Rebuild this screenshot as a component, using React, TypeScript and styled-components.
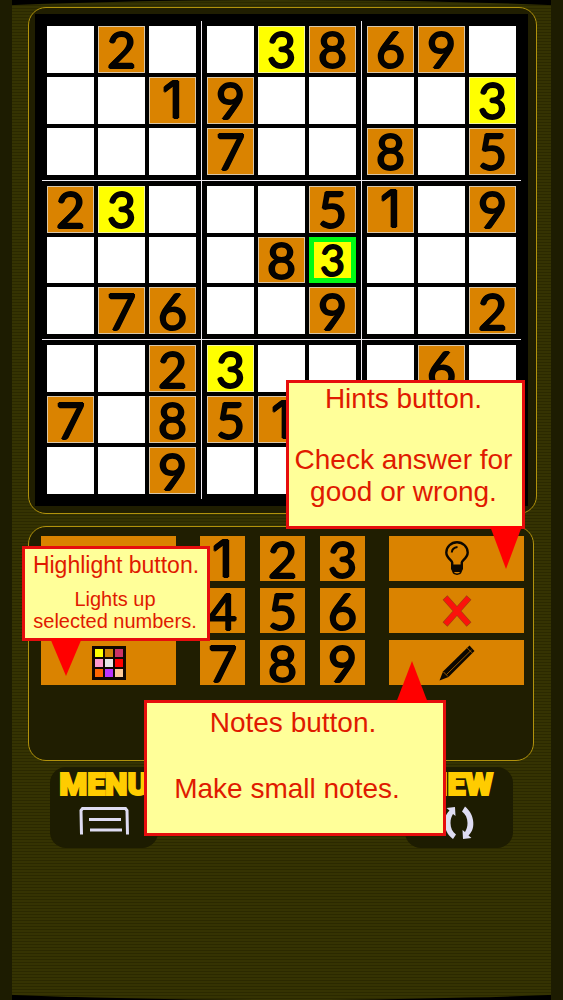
import React from "react";
import styled, { createGlobalStyle, css } from "styled-components";

const color = {
  edge: "#1d1c01",
  panel: "#201e01",
  outline: "#b1920c",
  orange: "#da8300",
  yellow: "#ffff00",
  select: "#00fa14",
  note: "#ffff99",
  noteText: "#e01a00",
  noteBorder: "#e60d0d",
  title: "#ffcc00",
  glyph: "#dedcf2",
};

const GlobalStyle = createGlobalStyle`
  * { box-sizing: border-box; }
  body { margin: 0; background: ${color.edge}; }
  button { margin: 0; padding: 0; border: 0; cursor: pointer; }
`;

const Page = styled.main`
  display: flex;
  flex-direction: column;
  min-height: 100vh;
  max-width: 640px;
  margin: 0 auto;
  padding: 0 12px;
  font-family: "Liberation Sans", Arial, sans-serif;
`;

const Surround = styled.div`
  flex: 1;
  display: flex;
  background: #000000;
`;

const Backdrop = styled.div`
  flex: 1;
  min-width: 0;
  padding: 7px 14px 24px 16px;
  clip-path: ellipse(354% 50% at 50% 50%);
  background: repeating-linear-gradient(
      to bottom,
      #353302 0,
      #353302 2px,
      #2b2900 2px,
      #2b2900 3px
    );
`;

const Game = styled.div`
  position: relative;
  display: flex;
  flex-direction: column;
`;

const BoardPanel = styled.section`
  padding: 6px 8px 7px 6px;
  border: 1px solid ${color.outline};
  border-radius: 18px;
  background: ${color.panel};
`;

const BoardGrid = styled.div`
  display: grid;
  grid-template-columns: minmax(0, 1fr) 11px minmax(0, 1fr) 11px minmax(0, 1fr);
  grid-template-rows: minmax(0, 1fr) 11px minmax(0, 1fr) 11px minmax(0, 1fr);
  aspect-ratio: 493 / 492;
  padding: 12px;
  background: #000000;
`;

const BoxGrid = styled.div<{ $row: number; $col: number }>`
  grid-row: ${(p) => p.$row * 2 + 1};
  grid-column: ${(p) => p.$col * 2 + 1};
  display: grid;
  grid-template-columns: repeat(3, minmax(0, 1fr));
  grid-template-rows: repeat(3, minmax(0, 1fr));
  gap: 4px;
`;

const Rule = styled.span<{ $vertical?: boolean; $track: number }>`
  background: #f0ecf2;
  ${(p) =>
    p.$vertical
      ? css`
          grid-column: ${p.$track};
          grid-row: 1 / -1;
          width: 1px;
          margin: -5px auto;
        `
      : css`
          grid-row: ${p.$track};
          grid-column: 1 / -1;
          height: 1px;
          margin: auto -5px;
        `}
`;

const digitFace = css<{ $plainStem?: boolean }>`
  display: flex;
  align-items: center;
  justify-content: center;
  min-width: 0;
  min-height: 0;
  font-family: ${(p) => (p.$plainStem ? "Inter" : "Lato")}, "Liberation Sans", sans-serif;
  font-weight: 400;
  font-size: 50px;
  line-height: ${(p) => (p.$plainStem ? 42 : 40)}px;
  color: #050300;
  text-shadow: 1px 0 #050300, -1px 0 #050300, 0 1px #050300, 0 -1px #050300;
`;

type Tone = "empty" | "given" | "match" | "selected";

const toneStyle = {
  empty: css`
    background: #ffffff;
  `,
  given: css`
    background: ${color.orange};
    border: 1px solid #d9c6a8;
  `,
  match: css`
    background: ${color.yellow};
    border: 1px solid #f4f4a0;
  `,
  selected: css`
    background: ${color.yellow};
    border: 5px solid ${color.select};
    font-size: 43px;
    line-height: 36px;
  `,
};

const Cell = styled.button<{ $tone: Tone; $plainStem?: boolean }>`
  ${digitFace}
  && {
    ${(p) => toneStyle[p.$tone]}
  }
`;

const ControlPanel = styled.section`
  display: grid;
  grid-template-columns: minmax(0, 1fr) auto minmax(0, 1fr);
  column-gap: 24px;
  align-items: start;
  min-height: 235px;
  margin: 12px 3px 0 0;
  padding: 9px 9px 9px 12px;
  border: 1px solid ${color.outline};
  border-radius: 18px;
  background: ${color.panel};
`;

const ActionColumn = styled.div`
  display: grid;
  grid-auto-rows: 45px;
  row-gap: 7px;
`;

const ActionButton = styled.button`
  display: flex;
  align-items: center;
  justify-content: center;
  background: ${color.orange};
`;

const Keypad = styled.div`
  display: grid;
  grid-template-columns: repeat(3, 45px);
  grid-auto-rows: 45px;
  gap: 7px 15px;
`;

const Key = styled.button<{ $plainStem?: boolean }>`
  ${digitFace}
  background: ${color.orange};
`;

const Footer = styled.nav`
  display: flex;
  justify-content: space-between;
  margin: 6px 24px 0 22px;
`;

const FooterButton = styled.button`
  display: flex;
  flex-direction: column;
  align-items: center;
  gap: 5px;
  width: 108px;
  height: 81px;
  border-radius: 16px;
  background: ${color.edge};
  color: ${color.title};
  font-family: Roboto, "Liberation Sans", sans-serif;
  font-weight: 900;
  font-size: 32px;
  line-height: 34px;
  -webkit-text-stroke: 2px ${color.title};
`;

const Callout = styled.aside<{ $pointer: number; $reach: number; $up?: boolean }>`
  position: absolute;
  border: 3px solid ${color.noteBorder};
  background: ${color.note};
  color: ${color.noteText};
  text-align: center;
  white-space: nowrap;

  &::after {
    content: "";
    position: absolute;
    left: ${(p) => p.$pointer}px;
    width: 32px;
    height: ${(p) => p.$reach}px;
    background: #ff0000;
    ${(p) =>
      p.$up
        ? css`
            bottom: 100%;
            clip-path: polygon(50% 0, 100% 100%, 0 100%);
          `
        : css`
            top: 100%;
            clip-path: polygon(0 0, 100% 0, 50% 100%);
          `}
  }
`;

const HintsCallout = styled(Callout)`
  top: 373px;
  right: 12px;
  width: 239px;
  height: 149px;
`;

const HighlightCallout = styled(Callout)`
  top: 539px;
  left: -6px;
  width: 188px;
  height: 95px;
`;

const NotesCallout = styled(Callout)`
  top: 693px;
  left: 116px;
  width: 302px;
  height: 136px;
`;

const lineSize = {
  large: css`
    margin-right: 4px;
    font-size: 28px;
    line-height: 32px;
  `,
  medium: css`
    font-size: 23px;
    line-height: 32px;
  `,
  small: css`
    font-size: 20px;
    line-height: 22px;
  `,
};

const Line = styled.p<{ $size?: keyof typeof lineSize; $before?: number; $after?: number }>`
  margin: ${(p) => p.$before ?? 0}px 0 0;
  padding-right: ${(p) => p.$after ?? 0}px;
  ${(p) => lineSize[p.$size ?? "large"]}
`;

const rows = [
  ".2..3869.",
  "..19....3",
  "...7..8.5",
  "23...51.9",
  "....83...",
  ".76..9..2",
  "..23...6.",
  "7.851....",
  "..9......",
];

const selected = { row: 4, col: 5 };

function toneOf(row: number, col: number): Tone {
  if (row === selected.row && col === selected.col) return "selected";
  const value = rows[row][col];
  if (value === ".") return "empty";
  return value === rows[selected.row][selected.col] ? "match" : "given";
}

const three = [0, 1, 2];

function Board() {
  return (
    <BoardPanel>
      <BoardGrid>
        {three.map((br) =>
          three.map((bc) => (
            <BoxGrid key={`${br}${bc}`} $row={br} $col={bc}>
              {three.map((r) =>
                three.map((c) => {
                  const row = br * 3 + r;
                  const col = bc * 3 + c;
                  const value = rows[row][col];
                  return (
                    <Cell
                      key={`${row}${col}`}
                      type="button"
                      $tone={toneOf(row, col)}
                      $plainStem={value === "1"}
                    >
                      {value === "." ? "" : value}
                    </Cell>
                  );
                })
              )}
            </BoxGrid>
          ))
        )}
        <Rule $track={2} />
        <Rule $track={4} />
        <Rule $vertical $track={2} />
        <Rule $vertical $track={4} />
      </BoardGrid>
    </BoardPanel>
  );
}

const swatches = [
  "#ffff00", "#cf8405", "#cc3366",
  "#ff99cc", "#e6e6e6", "#ff0000",
  "#ff6600", "#bb33ff", "#ffcc99",
];

function PaletteIcon() {
  return (
    <svg width="34" height="34" viewBox="0 0 34 34" aria-hidden="true">
      <rect width="34" height="34" fill="#120700" />
      {swatches.map((fill, i) => (
        <rect key={fill} x={3 + (i % 3) * 10} y={3 + Math.floor(i / 3) * 10} width="8" height="8" fill={fill} />
      ))}
    </svg>
  );
}

function BulbIcon() {
  return (
    <svg width="26" height="35" viewBox="0 0 26 35" fill="none" stroke="#0c0700" aria-hidden="true">
      <path d="M8.200 24v-2.500c0-2-5.900-4.300-5.900-9.900a10.700 10.400 0 0 1 21.400 0c0 5.600-5.900 7.900-5.900 9.900V24" strokeWidth="2.400" />
      <path d="M7.800 11.500c.2-3.200 2.200-5 5.700-5.400" strokeWidth="2" />
      <path d="M7 23.500h12v4.500l-1.500 3h-9L7 28z" fill="#0c0700" stroke="none" />
      <path d="M9 30.500c.3 1.800 1.500 2.700 4 2.700s3.700-.9 4-2.700" strokeWidth="1.500" />
    </svg>
  );
}

function CrossIcon() {
  return (
    <svg width="30" height="34" viewBox="0 0 30 34" fill="none" aria-hidden="true">
      <path d="M3 3.500 27 30.500M27 3.500 3 30.500" stroke="#a83c10" strokeWidth="6.400" />
      <path d="M3.500 4 26.500 30M26.500 4 3.500 30" stroke="#fb120c" strokeWidth="5.200" />
    </svg>
  );
}

function PencilIcon() {
  return (
    <svg width="36" height="36" viewBox="0 0 36 36" aria-hidden="true">
      <path d="M0.500 35.500 4 26.500 30.500 0.500 35.500 6 9.500 32z" fill="#0c0700" />
      <path d="M4.500 27 9 31.500M7.500 29.500 32.500 5M28 2.800l5 5" stroke="#a86300" strokeWidth="0.900" fill="none" />
    </svg>
  );
}

function MenuIcon() {
  return (
    <svg width="50" height="30" viewBox="0 0 50 30" fill="none" stroke={color.glyph} strokeWidth="3" aria-hidden="true">
      <path d="M2.500 28.500 2 4.500 3.500 2.500h43L48 4.500l.5 24" />
      <path d="M10 13.500h32M11 24h32" />
    </svg>
  );
}

function RefreshIcon() {
  return (
    <svg width="30" height="34" viewBox="0 0 30 34" fill={color.glyph} aria-hidden="true">
      <path d="M11 1 2.500 2l3 2.500C1 9 0 14 1 20c1 6 4 10 8 13l3-4.500C8.500 26 6.500 22 6.500 17c0-4 1-6.500 2.500-9L11.500 10z" />
      <path d="M19 33l8.500-1-3-2.500C29 25 30 20 29 14 28 8 25 4 21 .5L18 5.500C21.500 8 23.500 12 23.500 17c0 4-1 6.500-2.500 9L18.500 24z" />
    </svg>
  );
}

export default function App() {
  return (
    <>
      <GlobalStyle />
      <Page>
        <Surround>
          <Backdrop>
            <Game>
              <Board />
              <ControlPanel>
                <ActionColumn>
                  <ActionButton type="button" />
                  <ActionButton type="button" />
                  <ActionButton type="button" aria-label="Highlight">
                    <PaletteIcon />
                  </ActionButton>
                </ActionColumn>
                <Keypad>
                  {[1, 2, 3, 4, 5, 6, 7, 8, 9].map((n) => (
                    <Key key={n} type="button" $plainStem={n === 1}>{n}</Key>
                  ))}
                </Keypad>
                <ActionColumn>
                  <ActionButton type="button" aria-label="Hints"><BulbIcon /></ActionButton>
                  <ActionButton type="button" aria-label="Clear"><CrossIcon /></ActionButton>
                  <ActionButton type="button" aria-label="Notes"><PencilIcon /></ActionButton>
                </ActionColumn>
              </ControlPanel>
              <Footer>
                <FooterButton type="button">
                  MENU
                  <MenuIcon />
                </FooterButton>
                <FooterButton type="button">
                  NEW
                  <RefreshIcon />
                </FooterButton>
              </Footer>

              <HintsCallout $pointer={201} $reach={43}>
                <Line>Hints button.</Line>
                <Line $before={29}>Check answer for<br />good or wrong.</Line>
              </HintsCallout>
              <HighlightCallout $pointer={25} $reach={38}>
                <Line $size="medium">Highlight button.</Line>
                <Line $size="small" $before={7} $after={2}>Lights up<br />selected numbers.</Line>
              </HighlightCallout>
              <NotesCallout $pointer={249} $reach={42} $up>
                <Line $before={4}>Notes button.</Line>
                <Line $before={34} $after={12}>Make small notes.</Line>
              </NotesCallout>
            </Game>
          </Backdrop>
        </Surround>
      </Page>
    </>
  );
}
